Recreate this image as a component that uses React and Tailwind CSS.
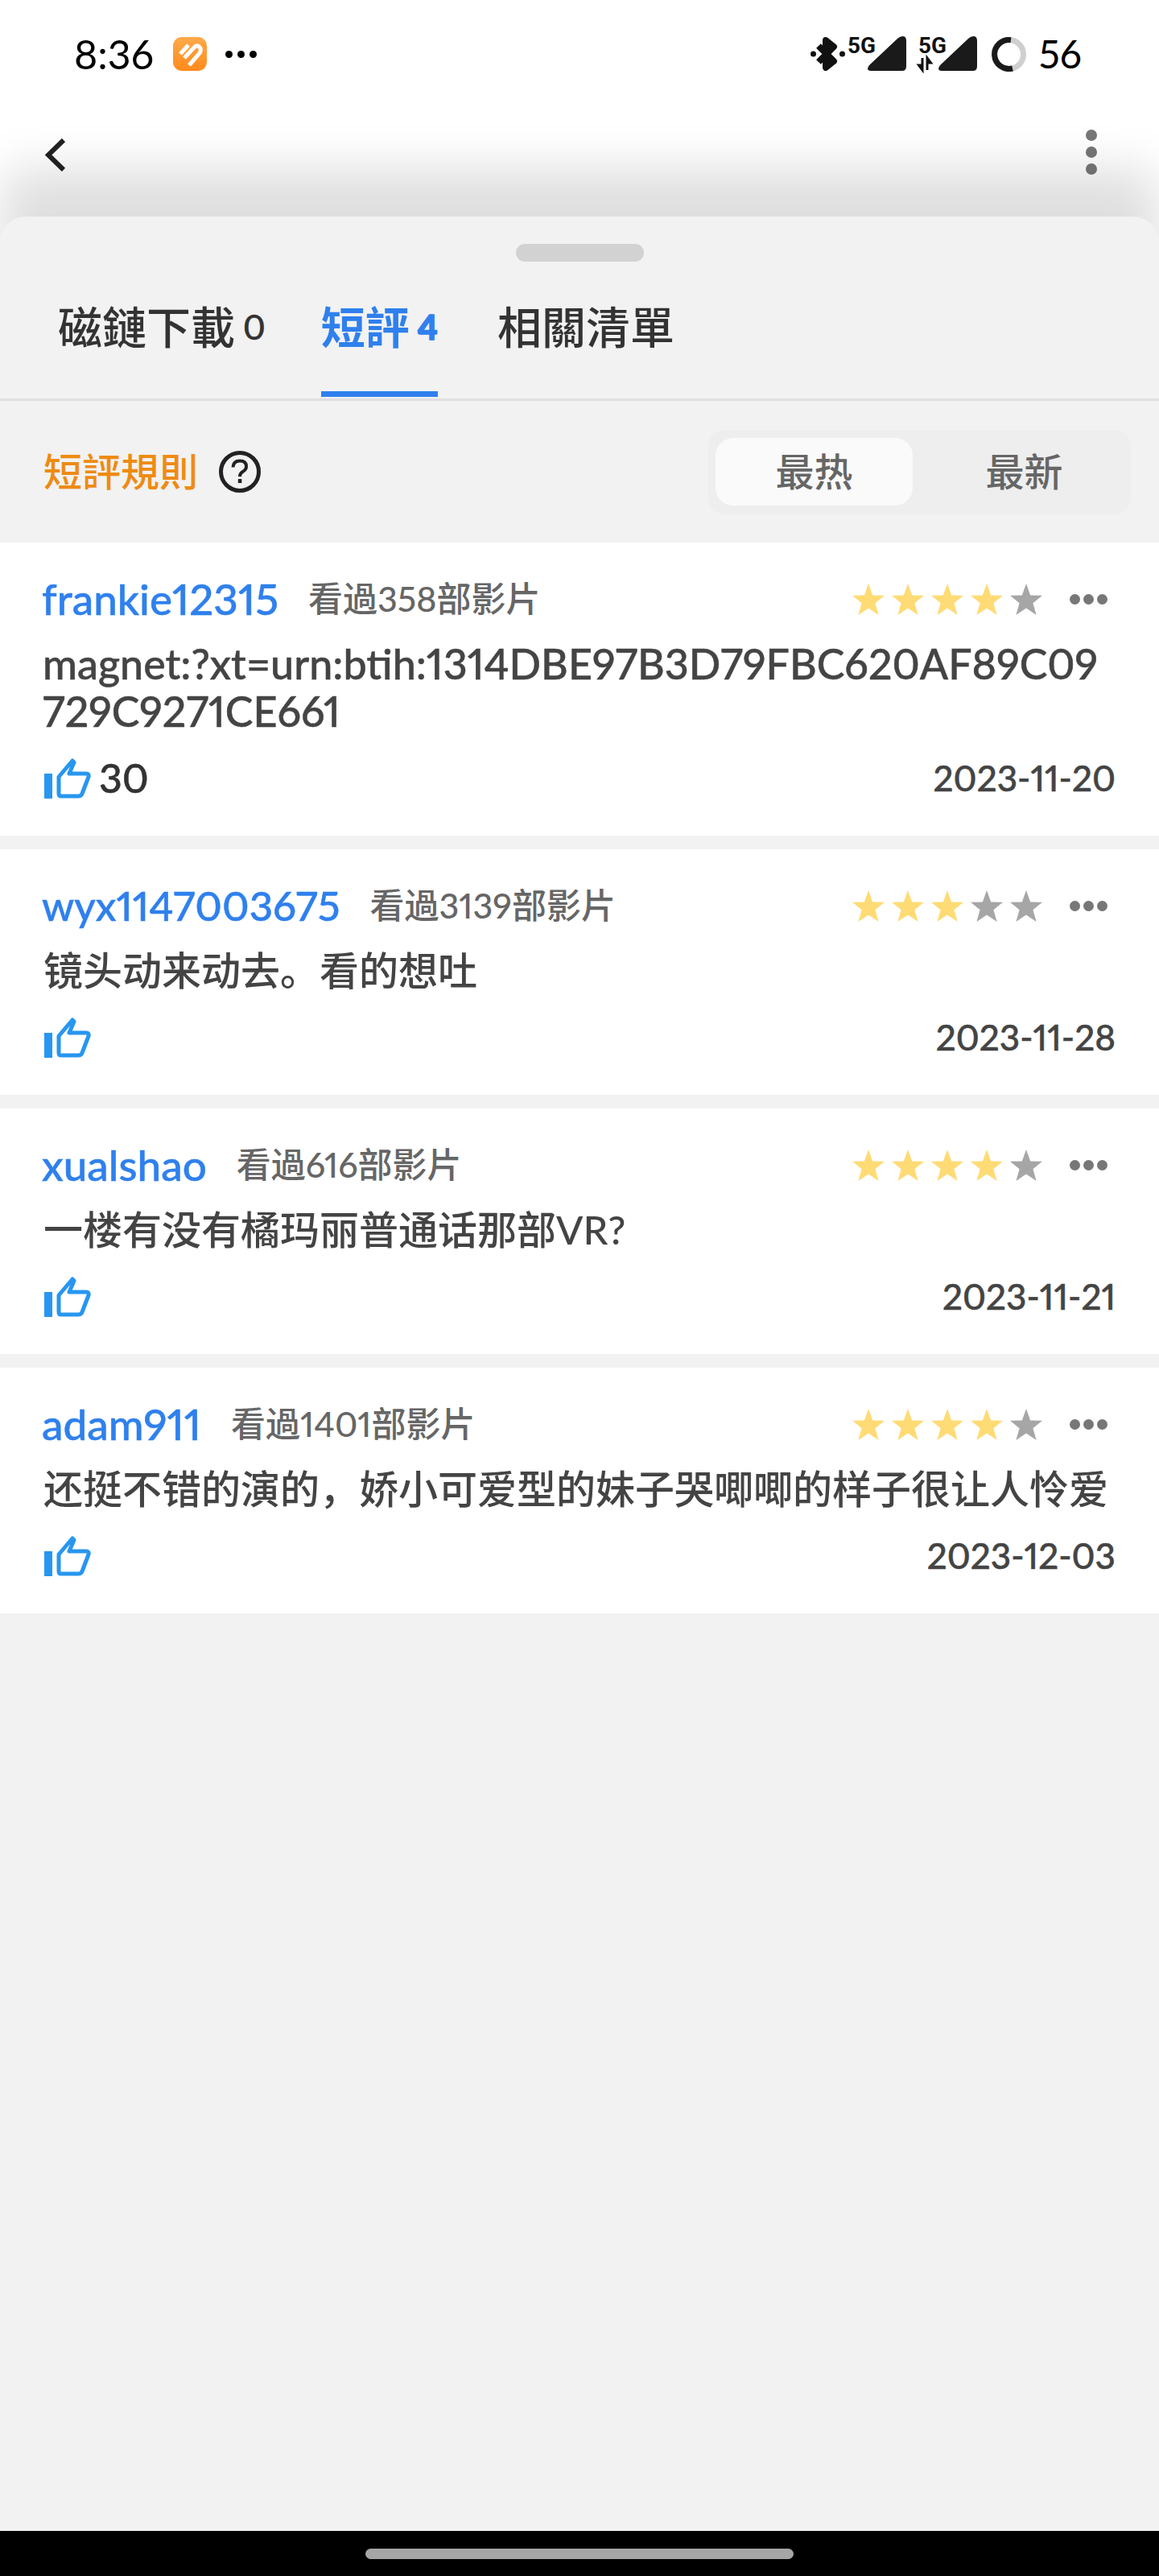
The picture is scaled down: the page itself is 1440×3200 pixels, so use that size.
const comments = [
  {
    name: 'frankie12315',
    seen: '看過358部影片',
    body: ['magnet:?xt=urn:btih:1314DBE97B3D79FBC620AF89C09', '729C9271CE661'],
    latin: true,
    likes: '30',
    date: '2023-11-20',
    stars: 4,
  },
  { name: 'wyx1147003675', narrow: true, seen: '看過3139部影片', body: ['镜头动来动去。看的想吐'], date: '2023-11-28', stars: 3 },
  { name: 'xualshao', seen: '看過616部影片', body: ['一楼有没有橘玛丽普通话那部VR?'], date: '2023-11-21', stars: 4 },
  { name: 'adam911', seen: '看過1401部影片', body: ['还挺不错的演的，娇小可爱型的妹子哭唧唧的样子很让人怜爱'], date: '2023-12-03', stars: 4 },
]

const Star = ({ on }) => (
  <svg width="40" height="39" viewBox="0 0 40 39">
    <path
      d="M20 0 L25.2 14.6 L40 14.8 L28.4 24.2 L32.6 39 L20 30.4 L7.4 39 L11.6 24.2 L0 14.8 L14.8 14.6 Z"
      fill={on ? '#ffdb75' : '#a6a6a6'}
    />
  </svg>
)

const Thumb = () => (
  <svg className="ml-[1px]" width="58" height="52" viewBox="0 0 58 52">
    <rect x="0" y="21" width="10" height="31" fill="#2896f0" />
    <path
      d="M18 25 L35 5 L37 7 L31 21 L52 21 Q56 21 55 25 L47 46 Q46 49 42 49 L21 49 Q18 49 18 46 Z"
      fill="none"
      stroke="#2896f0"
      strokeWidth="5"
      strokeLinejoin="round"
    />
  </svg>
)

const Signal = ({ arrows }) => (
  <svg className="overflow-visible" width="74" height="44" viewBox="0 0 74 44">
    <text x="0" y="21" fontSize="28" fontWeight="700" fill="#111" fontFamily="Roboto, sans-serif" textLength="35" lengthAdjust="spacingAndGlyphs">5G</text>
    {arrows && <path d="M5 27 V42 L0.5 36 H5 M11 42 V27 L15.5 33 H11" stroke="#111" strokeWidth="3" fill="#111" />}
    <path d="M69 0 Q73 0 73 6 V37 Q73 43 68 43 H29 Q22 43 27 36 L62 3 Q65 0 69 0 Z" fill="#1a1a1a" />
  </svg>
)

const CommentCard = ({ c }) => (
  <div className="bg-white px-[54px] pt-[40px] pb-[42px] font-medium">
    <div className="flex items-center h-[60px]">
      <span className={c.narrow ? '-ml-[2px] text-[51px] leading-[60px] text-[#2f80ed] [-webkit-text-stroke:0.5px]' : '-ml-[2px] text-[53px] leading-[60px] text-[#2f80ed] [-webkit-text-stroke:0.5px]'}>{c.name}</span>
      <span className="ml-[37px] text-[43px] leading-[60px] text-[#666666]">{c.seen}</span>
      <div className="ml-auto flex items-center gap-[9px] mr-[10px]">
        {[0, 1, 2, 3, 4].map((i) => (
          <Star key={i} on={i < c.stars} />
        ))}
        <div className="flex items-center gap-[4px] ml-[25px]">
          <div className="w-[13px] h-[13px] rounded-full bg-[#777777]" />
          <div className="w-[13px] h-[13px] rounded-full bg-[#777777]" />
          <div className="w-[13px] h-[13px] rounded-full bg-[#777777]" />
        </div>
      </div>
    </div>
    <div className={c.latin ? 'mt-[21px] -ml-[1px] text-[52px] leading-[59px] text-[#444444] whitespace-nowrap [-webkit-text-stroke:0.5px]' : 'mt-[21px] text-[49px] leading-[59px] text-[#444444] whitespace-nowrap'}>
      {c.body.map((line) => (
        <div key={line}>{line}</div>
      ))}
    </div>
    <div className="mt-[23px] flex items-center h-[60px]">
      <Thumb />
      {c.likes && <span className="ml-[10px] text-[50px] text-[#333333] [-webkit-text-stroke:0.5px]">{c.likes}</span>}
      <span className="ml-auto text-[44px] text-[#444444] [-webkit-text-stroke:0.5px]">{c.date}</span>
    </div>
  </div>
)

export default function App() {
  return (
    <div className="w-[1440px] h-[3200px] flex flex-col overflow-hidden bg-white proportional-nums font-['Lato','Noto_Sans_CJK_SC',sans-serif]">
      {/* Status bar */}
      <div className="h-[134px] flex items-center pl-[92px] pr-[96px] text-black">
        <span className="text-[50px] leading-none">8:36</span>
        <svg className="ml-[24px]" width="42" height="42" viewBox="0 0 42 42">
          <defs>
            <linearGradient id="app" x1="0" y1="0" x2="0" y2="1">
              <stop offset="0" stopColor="#ffa94a" />
              <stop offset="1" stopColor="#ff8a1c" />
            </linearGradient>
          </defs>
          <rect width="42" height="42" rx="11" fill="url(#app)" />
          <path d="M9 21 L19 10 M14 26 L27 12 Q31 9 34 14 Q35 17 33 20 L20 35" stroke="#fff" strokeWidth="5" fill="none" />
        </svg>
        <div className="ml-[23px] flex gap-[6px]">
          <div className="w-[9px] h-[9px] rounded-full bg-black" />
          <div className="w-[9px] h-[9px] rounded-full bg-black" />
          <div className="w-[9px] h-[9px] rounded-full bg-black" />
        </div>
        <div className="ml-auto flex items-center">
          <svg width="43" height="42" viewBox="0 0 43 42">
            <circle cx="3.5" cy="21" r="3.5" fill="#111" />
            <circle cx="39.5" cy="21" r="3.5" fill="#111" />
            <path d="M10 11 L29 30 L19 38 V4 L29 12 L10 31" stroke="#111" strokeWidth="8" strokeLinejoin="round" fill="none" />
          </svg>
          <div className="ml-[3px]">
            <Signal />
          </div>
          <div className="ml-[14px]">
            <Signal arrows />
          </div>
          <svg className="ml-[17px]" width="43" height="43" viewBox="0 0 43 43">
            <circle cx="21.5" cy="21.5" r="18" fill="none" stroke="#cfcfcf" strokeWidth="7" />
            <path d="M24 3.7 A18 18 0 1 0 26 39" fill="none" stroke="#1a1a1a" strokeWidth="7" />
          </svg>
          <span className="ml-[16px] text-[48px] leading-none">56</span>
        </div>
      </div>

      {/* Header */}
      <div className="relative h-[135px] flex items-start justify-between pl-[56px] pr-[77px] pt-[27px]">
        <svg className="mt-[11px]" width="26" height="41" viewBox="0 0 26 41">
          <path d="M23 2 L4 20.5 L23 39" fill="none" stroke="#222222" strokeWidth="6" />
        </svg>
        <div className="flex flex-col gap-[7px]">
          <div className="w-[14px] h-[14px] rounded-full bg-[#777777]" />
          <div className="w-[14px] h-[14px] rounded-full bg-[#777777]" />
          <div className="w-[14px] h-[14px] rounded-full bg-[#777777]" />
        </div>
      </div>

      {/* Sheet */}
      <div className="relative flex-1 bg-[#f2f2f2] rounded-t-[32px] shadow-[0_-60px_60px_rgba(0,0,0,0.13)]">
        <div className="pt-[34px] flex justify-center">
          <div className="w-[159px] h-[22px] rounded-full bg-[#d2d2d2]" />
        </div>
        <div className="mt-[51px] pl-[72px] pb-[2px] flex border-b-[3px] border-[#e0e0e0]">
          <div className="h-[117px] mr-[69px]">
            <div className="h-[60px] flex items-center text-[#333333] font-medium">
              <span className="text-[55px] leading-[60px]">磁鏈下載</span>
              <span className="ml-[10px] text-[42px] leading-[60px] [-webkit-text-stroke:0.5px]">0</span>
            </div>
          </div>
          <div className="h-[117px] mr-[74px] flex flex-col">
            <div className="h-[60px] flex items-center text-[#2f80ed] font-bold">
              <span className="text-[55px] leading-[60px]">短評</span>
              <span className="ml-[10px] text-[42px] leading-[60px] font-black [-webkit-text-stroke:1.5px]">4</span>
            </div>
            <div className="mt-[50px] h-[7px] bg-[#2f80ed]" />
          </div>
          <div className="h-[117px]">
            <div className="h-[60px] flex items-center text-[#333333] font-medium">
              <span className="text-[55px] leading-[60px]">相關清單</span>
            </div>
          </div>
        </div>

        <div className="h-[176px] flex items-center justify-between pl-[54px] pr-[35px]">
          <div className="flex items-center">
            <span className="text-[48px] text-[#ee8b13] font-medium">短評規則</span>
            <svg className="ml-[26px]" width="52" height="52" viewBox="0 0 52 52">
              <circle cx="26" cy="26" r="23.5" fill="none" stroke="#222222" strokeWidth="5" />
              <path d="M17.5 20.5 Q18 12.5 26 12.5 Q34 12.5 34 19.5 Q34 23.5 29.5 26 Q26 28 26 32" fill="none" stroke="#222222" strokeWidth="4" />
              <rect x="23.8" y="35" width="4.5" height="5" fill="#222222" />
            </svg>
          </div>
          <div className="w-[525px] h-[105px] rounded-[20px] bg-[#eeeeee] flex items-center pl-[9px]">
            <div className="w-[245px] h-[84px] rounded-[22px] bg-[#fafafa] flex items-center justify-center text-[48px] text-[#666666] font-medium">
              最热
            </div>
            <div className="flex-1 flex items-center justify-center pl-[6px] text-[48px] text-[#666666] font-medium">最新</div>
          </div>
        </div>

        <div className="flex flex-col gap-[17px]">
          {comments.map((c) => (
            <CommentCard key={c.name} c={c} />
          ))}
        </div>
      </div>

      {/* Nav bar */}
      <div className="relative h-[56px] bg-black flex items-center justify-center">
        <div className="w-[532px] h-[13px] rounded-full bg-[#a6a6a6]" />
      </div>
    </div>
  )
}
